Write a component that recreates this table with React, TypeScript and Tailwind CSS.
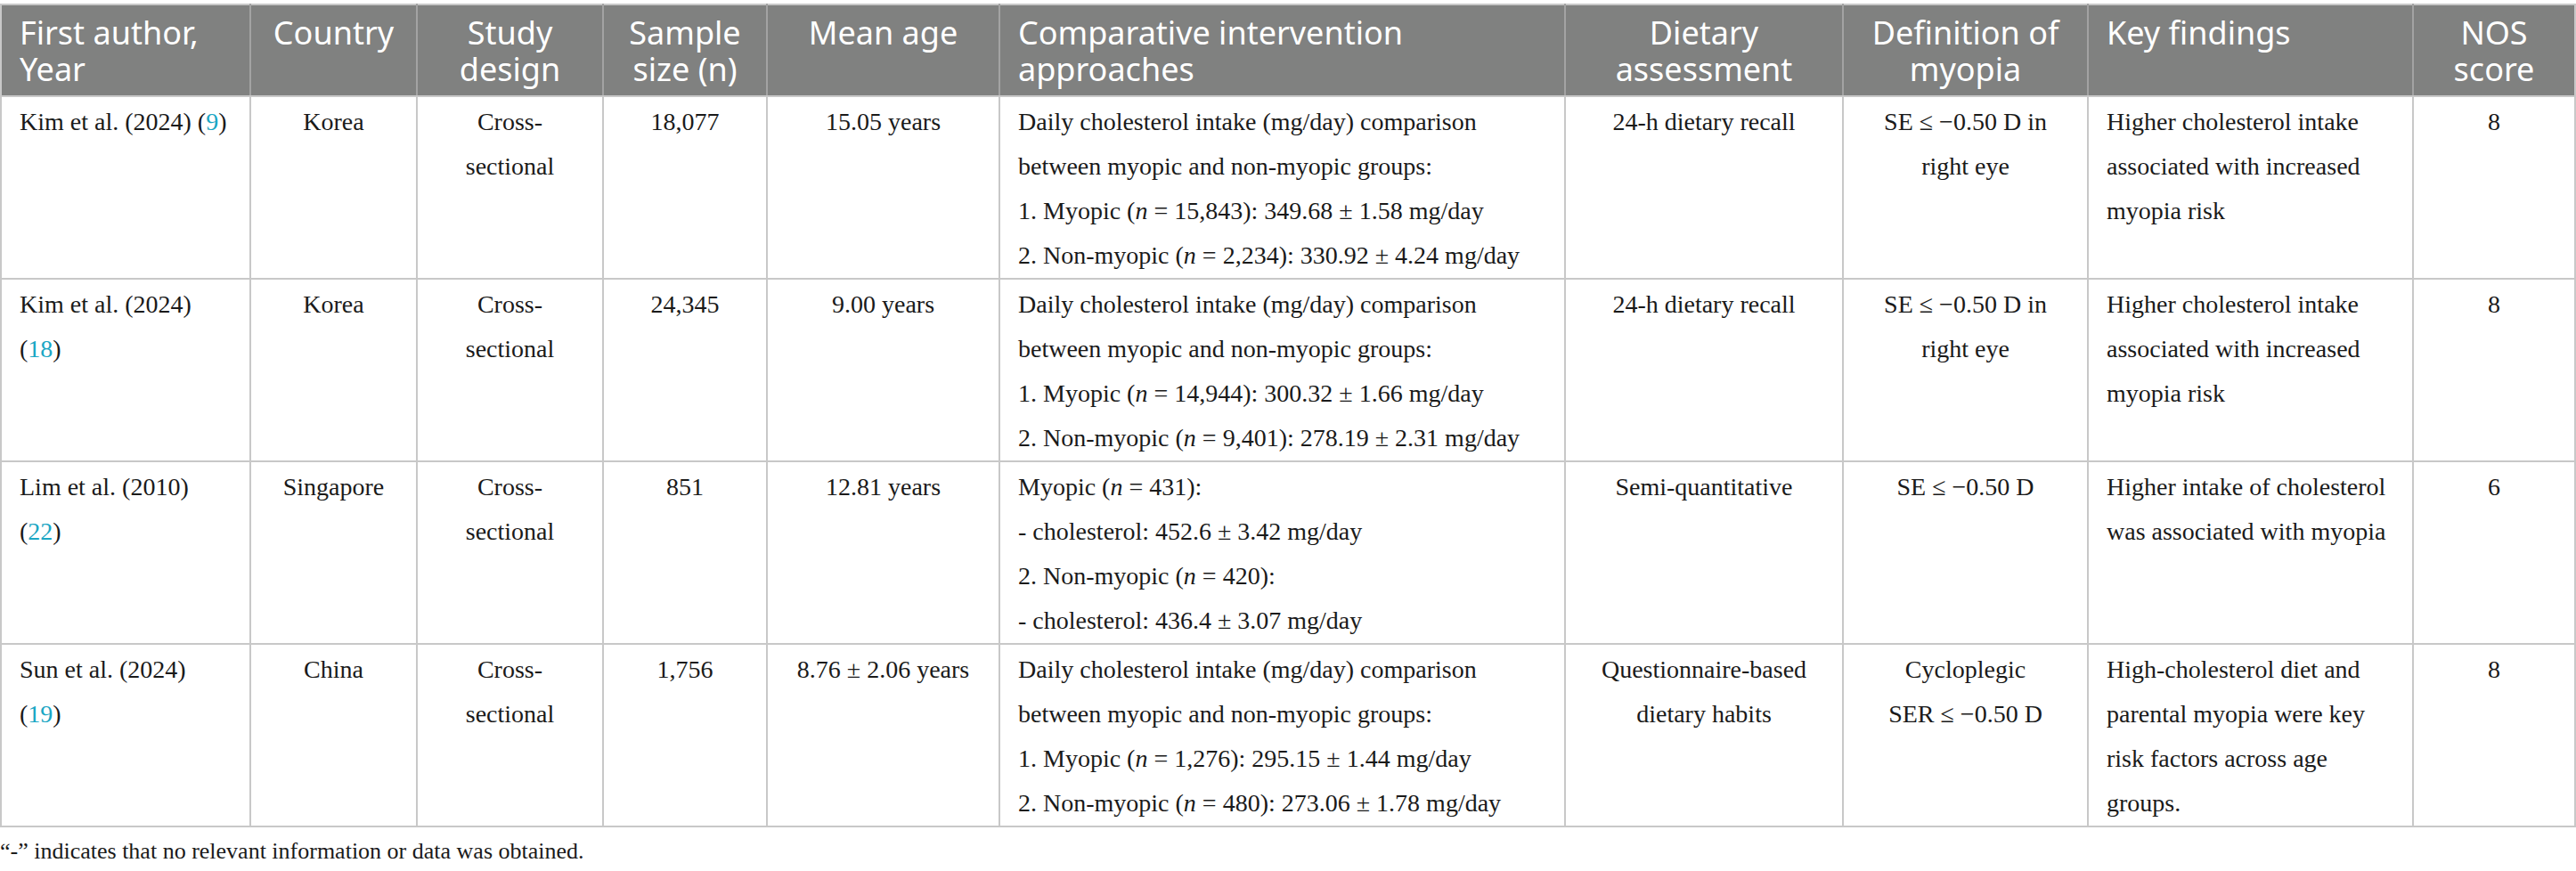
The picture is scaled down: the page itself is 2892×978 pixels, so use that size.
import React from 'react';

type Align = 'left' | 'center';

interface Column {
  width: number;
  align: Align;
  head: React.ReactNode;
}

const columns: Column[] = [
  { width: 280, align: 'left', head: <>First author,<br />Year</> },
  { width: 187, align: 'center', head: <>Country</> },
  { width: 209, align: 'center', head: <>Study<br />design</> },
  { width: 184, align: 'center', head: <>Sample<br />size (n)</> },
  { width: 261, align: 'center', head: <>Mean age</> },
  { width: 635, align: 'left', head: <>Comparative intervention<br />approaches</> },
  { width: 312, align: 'center', head: <>Dietary<br />assessment</> },
  { width: 275, align: 'center', head: <>Definition of<br />myopia</> },
  { width: 365, align: 'left', head: <>Key findings</> },
  { width: 182, align: 'center', head: <>NOS<br />score</> },
];

function Ref({ n }: { n: string }) {
  return (
    <>
      (<span className="text-[#1aa6c4]">{n}</span>)
    </>
  );
}

function N() {
  return <i>n</i>;
}

function Lines({ items }: { items: React.ReactNode[] }) {
  return (
    <>
      {items.map((item, i) => (
        <div key={i} className="whitespace-nowrap">
          {item}
        </div>
      ))}
    </>
  );
}

const dailyIntro = [
  'Daily cholesterol intake (mg/day) comparison',
  'between myopic and non-myopic groups:',
];

const rows: React.ReactNode[][] = [
  [
    <Lines items={[<>Kim et al. (2024) <Ref n="9" /></>]} />,
    'Korea',
    <Lines items={['Cross-', 'sectional']} />,
    '18,077',
    '15.05 years',
    <Lines
      items={[
        ...dailyIntro,
        <>1. Myopic (<N /> = 15,843): 349.68 ± 1.58 mg/day</>,
        <>2. Non-myopic (<N /> = 2,234): 330.92 ± 4.24 mg/day</>,
      ]}
    />,
    '24-h dietary recall',
    <Lines items={['SE ≤ −0.50 D in', 'right eye']} />,
    <Lines items={['Higher cholesterol intake', 'associated with increased', 'myopia risk']} />,
    '8',
  ],
  [
    <Lines items={['Kim et al. (2024)', <Ref n="18" />]} />,
    'Korea',
    <Lines items={['Cross-', 'sectional']} />,
    '24,345',
    '9.00 years',
    <Lines
      items={[
        ...dailyIntro,
        <>1. Myopic (<N /> = 14,944): 300.32 ± 1.66 mg/day</>,
        <>2. Non-myopic (<N /> = 9,401): 278.19 ± 2.31 mg/day</>,
      ]}
    />,
    '24-h dietary recall',
    <Lines items={['SE ≤ −0.50 D in', 'right eye']} />,
    <Lines items={['Higher cholesterol intake', 'associated with increased', 'myopia risk']} />,
    '8',
  ],
  [
    <Lines items={['Lim et al. (2010)', <Ref n="22" />]} />,
    'Singapore',
    <Lines items={['Cross-', 'sectional']} />,
    '851',
    '12.81 years',
    <Lines
      items={[
        <>Myopic (<N /> = 431):</>,
        '- cholesterol: 452.6 ± 3.42 mg/day',
        <>2. Non-myopic (<N /> = 420):</>,
        '- cholesterol: 436.4 ± 3.07 mg/day',
      ]}
    />,
    'Semi-quantitative',
    'SE ≤ −0.50 D',
    <Lines items={['Higher intake of cholesterol', 'was associated with myopia']} />,
    '6',
  ],
  [
    <Lines items={['Sun et al. (2024)', <Ref n="19" />]} />,
    'China',
    <Lines items={['Cross-', 'sectional']} />,
    '1,756',
    '8.76 ± 2.06 years',
    <Lines
      items={[
        ...dailyIntro,
        <>1. Myopic (<N /> = 1,276): 295.15 ± 1.44 mg/day</>,
        <>2. Non-myopic (<N /> = 480): 273.06 ± 1.78 mg/day</>,
      ]}
    />,
    <Lines items={['Questionnaire-based', 'dietary habits']} />,
    <Lines items={['Cycloplegic', 'SER ≤ −0.50 D']} />,
    <Lines
      items={[
        'High-cholesterol diet and',
        'parental myopia were key',
        'risk factors across age',
        'groups.',
      ]}
    />,
    '8',
  ],
];

export default function App() {
  return (
    <div className="min-h-screen w-[2892px] bg-white pt-[4px]">
      <table className="w-[2890px] table-fixed border-collapse">
        <colgroup>
          {columns.map((c, i) => (
            <col key={i} style={{ width: c.width }} />
          ))}
        </colgroup>
        <thead>
          <tr className="bg-[#808180]">
            {columns.map((c, i) => (
              <th
                key={i}
                className={`border-2 border-x-[#a3a3a3] border-t-[#c8c8c8] border-b-[#c8c8c8] px-[20px] pt-[10px] pb-[9px] align-top font-['Noto_Sans',sans-serif] text-[36px] font-normal leading-[41px] text-white ${
                  c.align === 'left' ? 'text-left' : 'text-center'
                } ${i === 0 ? 'border-l-[#c8c8c8]' : ''} ${
                  i === columns.length - 1 ? 'border-r-[#c8c8c8]' : ''
                }`}
              >
                {c.head}
              </th>
            ))}
          </tr>
        </thead>
        <tbody>
          {rows.map((row, r) => (
            <tr key={r}>
              {row.map((cell, i) => (
                <td
                  key={i}
                  className={`border-2 border-[#c8c8c8] px-[20px] pt-[3px] pb-0 align-top font-['Liberation_Serif',serif] text-[28px] leading-[50px] text-[#1a1a1a] ${
                    columns[i].align === 'left' ? 'text-left' : 'text-center'
                  }`}
                >
                  {cell}
                </td>
              ))}
            </tr>
          ))}
        </tbody>
      </table>
      <p className="mt-[9px] font-['Liberation_Serif',serif] text-[26px] leading-[36px] text-[#1a1a1a]">
        “-” indicates that no relevant information or data was obtained.
      </p>
    </div>
  );
}
